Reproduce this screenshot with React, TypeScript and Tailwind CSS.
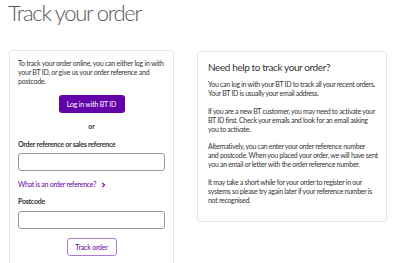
export default function App() {
  const font = { fontFamily: 'Lato, "Noto Sans", sans-serif' };
  return (
    <div className="w-[400px] h-[263px] overflow-hidden bg-white text-[#333]" style={font}>
      <h1 className="pl-[8px] pt-0 text-[22px] leading-[26px] font-light text-[#555] tracking-[-1.3px]">Track your order</h1>
      <div className="flex items-start gap-[23px] pl-[9px] pt-[24px]">
        <div className="w-[165px] h-[230px] shrink-0 border border-[#e6e6e6] rounded-[3px] px-[8px] pt-[8px]">
          <p className="text-[7px] leading-[9px] text-[#333] tracking-[-0.25px]">
            To track your order online, you can either log in with your BT ID, or give us your order reference and postcode.
          </p>
          <div className="flex justify-center mt-[9px]">
            <button className="w-[66px] h-[18px] bg-[#6400aa] rounded-[3px] text-white text-[7px] tracking-[-0.2px]">Log in with BT ID</button>
          </div>
          <p className="text-center text-[7px] font-bold leading-[9px] mt-[9px]">or</p>
          <p className="text-[7px] font-bold leading-[9px] mt-[9px] tracking-[-0.25px]">Order reference or sales reference</p>
          <div className="mt-[4px] h-[18px] w-[147px] border border-[#999] rounded-[3px]" />
          <p className="mt-[9px] text-[7px] leading-[9px] text-[#6400aa] flex items-center gap-[5px] tracking-[-0.25px]">
            What is an order reference?
            <svg width="5" height="6" viewBox="0 0 5 6"><path d="M1.2 0.8 L3.6 3 L1.2 5.2" fill="none" stroke="#6400aa" strokeWidth="1.1" /></svg>
          </p>
          <p className="text-[7px] font-bold leading-[9px] mt-[8px] tracking-[-0.25px]">Postcode</p>
          <div className="mt-[5px] h-[18px] w-[147px] border border-[#999] rounded-[3px]" />
          <div className="flex justify-center mt-[9px]">
            <button className="w-[50px] h-[18px] border border-[#b07ad8] rounded-[3px] text-[#6400aa] text-[7px] tracking-[-0.2px]">Track order</button>
          </div>
        </div>
        <div className="w-[190px] h-[171px] mt-[1px] shrink-0 border border-[#e6e6e6] rounded-[3px] pl-[10px] pr-[4px] pt-[8px]">
          <h2 className="text-[10px] leading-[14px] text-[#333] mb-[6px] tracking-[-0.4px]">Need help to track your order?</h2>
          <div className="flex flex-col gap-[8.5px] text-[7px] leading-[9px] text-[#333] tracking-[-0.3px] whitespace-nowrap">
            <p>You can log in with your BT ID to track all your recent orders.<br />Your BT ID is usually your email address.</p>
            <p>If you are a new BT customer, you may need to activate your<br />BT ID first. Check your emails and look for an email asking<br />you to activate.</p>
            <p>Alternatively, you can enter your order reference number<br />and postcode. When you placed your order, we will have sent<br />you an email or letter with the order reference number.</p>
            <p>It may take a short while for your order to register in our<br />systems so please try again later if your reference number is<br />not recognised.</p>
          </div>
        </div>
      </div>
    </div>
  );
}
